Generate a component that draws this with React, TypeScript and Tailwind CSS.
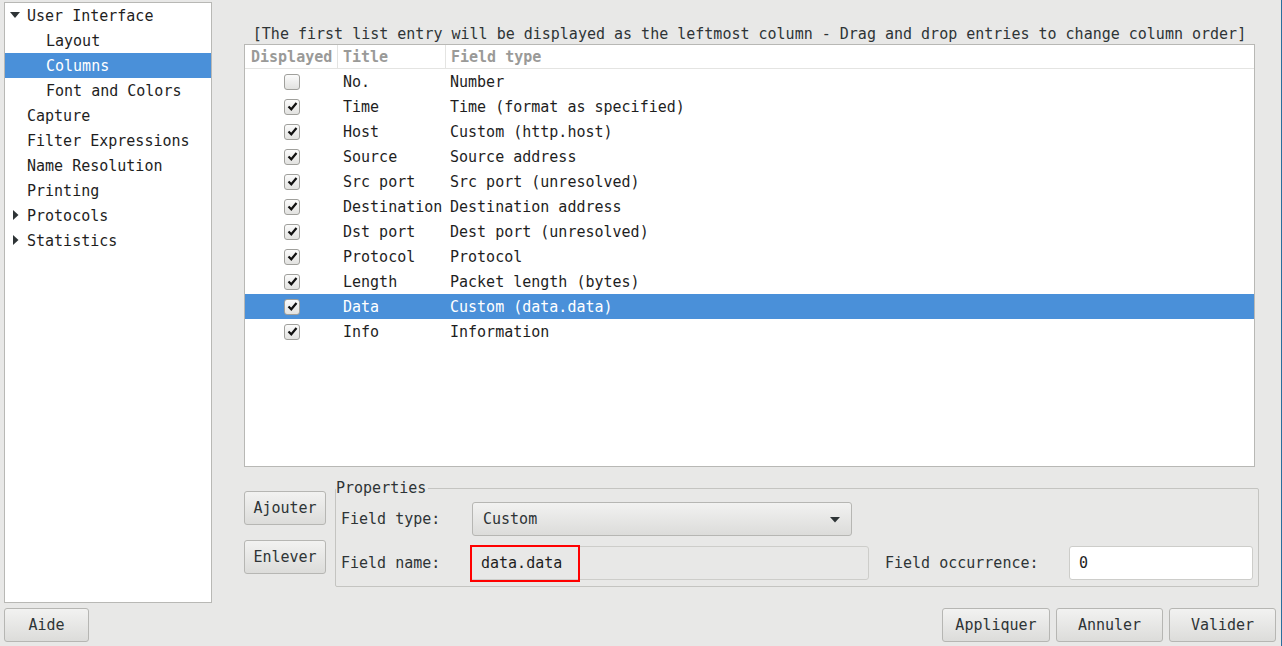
import React from "react";

const font = { fontFamily: '"DejaVu Sans Mono", "Liberation Mono", monospace' };

const tree = [
  { label: "User Interface", level: 0, arrow: "down" },
  { label: "Layout", level: 1 },
  { label: "Columns", level: 1, selected: true },
  { label: "Font and Colors", level: 1 },
  { label: "Capture", level: 0 },
  { label: "Filter Expressions", level: 0 },
  { label: "Name Resolution", level: 0 },
  { label: "Printing", level: 0 },
  { label: "Protocols", level: 0, arrow: "right" },
  { label: "Statistics", level: 0, arrow: "right" },
];

const columns = [
  { on: false, title: "No.", type: "Number" },
  { on: true, title: "Time", type: "Time (format as specified)" },
  { on: true, title: "Host", type: "Custom (http.host)" },
  { on: true, title: "Source", type: "Source address" },
  { on: true, title: "Src port", type: "Src port (unresolved)" },
  { on: true, title: "Destination", type: "Destination address" },
  { on: true, title: "Dst port", type: "Dest port (unresolved)" },
  { on: true, title: "Protocol", type: "Protocol" },
  { on: true, title: "Length", type: "Packet length (bytes)" },
  { on: true, title: "Data", type: "Custom (data.data)", selected: true },
  { on: true, title: "Info", type: "Information" },
];

function Button({ label, className }: { label: string; className: string }) {
  return (
    <div
      className={`flex h-[34px] items-center justify-center rounded-[3px] border border-[#b6b6b3] bg-gradient-to-b from-[#f2f2f1] to-[#dcdcda] text-[15px] text-[#2e3436] ${className}`}
    >
      {label}
    </div>
  );
}

function Check({ on }: { on: boolean }) {
  return (
    <div className="flex h-[16px] w-[16px] items-center justify-center rounded-[3px] border border-[#a0a09c] bg-gradient-to-b from-[#fbfbfb] to-[#e2e2e0]">
      {on && (
        <svg width="11" height="11" viewBox="0 0 11 11">
          <path d="M1.5 5.5 L4.3 8.3 L9.5 2" fill="none" stroke="#111" strokeWidth="2.2" />
        </svg>
      )}
    </div>
  );
}

export default function App() {
  return (
    <div
      style={font}
      className="flex h-[646px] w-[1282px] flex-col overflow-hidden border-r border-[#2a6f9e] bg-[#e8e8e7] text-[15px] leading-[20px] text-[#1e1e1e]"
    >
      <div className="flex h-[603px]">
        {/* arbre des préférences */}
        <div className="ml-[4px] mt-[2px] flex h-[601px] w-[208px] flex-col border border-[#b8b8b5] bg-white">
          {tree.map((t) => (
            <div
              key={t.label}
              className={`relative flex h-[25px] shrink-0 items-center ${
                t.selected ? "bg-[#4a90d9] text-white" : ""
              } ${t.level ? "pl-[41px]" : "pl-[22px]"}`}
            >
              {t.arrow === "down" && (
                <svg className="absolute left-[5px] top-[9px]" width="10" height="7" viewBox="0 0 10 7">
                  <path d="M0 0 H10 L5 6 Z" fill="#2e3436" />
                </svg>
              )}
              {t.arrow === "right" && (
                <svg className="absolute left-[8px] top-[7px]" width="6" height="10" viewBox="0 0 6 10">
                  <path d="M0 0 V10 L5.5 5 Z" fill="#2e3436" />
                </svg>
              )}
              {t.label}
            </div>
          ))}
        </div>

        {/* panneau colonnes */}
        <div className="ml-[32px] flex w-[1015px] flex-col pt-[24px]">
          <div className="mr-[4px] h-[20px] text-center text-[#2e3436]">
            [The first list entry will be displayed as the leftmost column - Drag and drop entries to change column order]
          </div>
          <div className="mr-[4px] flex h-[423px] flex-col border border-[#b8b8b5] bg-white">
            <div className="flex h-[24px] shrink-0 items-center border-b border-[#e4e4e2] font-bold text-[#9a9a98]">
              <div className="flex h-full w-[93px] items-center border-r border-[#e4e4e2] pl-[6px]">Displayed</div>
              <div className="flex h-full w-[108px] items-center border-r border-[#e4e4e2] pl-[5px]">Title</div>
              <div className="flex h-full items-center pl-[5px]">Field type</div>
            </div>
            {columns.map((c) => (
              <div
                key={c.title}
                className={`flex h-[25px] shrink-0 items-center ${c.selected ? "bg-[#4a90d9] text-white" : ""}`}
              >
                <div className="flex w-[94px] justify-center">
                  <Check on={c.on} />
                </div>
                <div className="w-[107px] pl-[4px]">{c.title}</div>
                <div className="pl-[4px]">{c.type}</div>
              </div>
            ))}
          </div>

          <div className="flex">
            <div className="mt-[24px] flex flex-col gap-[15px]">
              <Button label="Ajouter" className="w-[82px]" />
              <Button label="Enlever" className="w-[82px]" />
            </div>
            <fieldset className="ml-[9px] mt-[11px] h-[109px] flex-1 rounded-[2px] border border-[#c4c4c1] px-[5px] pb-[6px]">
              <legend className="-ml-[5px] px-0 pr-[2px] text-[#2e3436]">Properties</legend>
              <div className="mt-[4px] flex items-center">
                <div className="w-[131px] text-[#2e3436]">Field type:</div>
                <div className="relative flex h-[34px] w-[380px] items-center rounded-[3px] border border-[#b6b6b3] bg-gradient-to-b from-[#f2f2f1] to-[#dcdcda] pl-[10px] text-[#2e3436]">
                  Custom
                  <svg className="absolute right-[11px] top-[14px]" width="10" height="6" viewBox="0 0 10 6">
                    <path d="M0 0 H10 L5 5.5 Z" fill="#2e3436" />
                  </svg>
                </div>
              </div>
              <div className="mt-[10px] flex items-center">
                <div className="w-[129px] text-[#2e3436]">Field name:</div>
                <div className="relative flex h-[34px] w-[399px] items-center rounded-[3px] border border-[#cdcdca] bg-[#e8e8e7] pl-[10px]">
                  data.data
                  <div className="absolute -left-[1px] -top-[2px] h-[37px] w-[110px] border-2 border-[#ff0000]" />
                </div>
                <div className="ml-[16px] w-[184px] text-[#2e3436]">Field occurrence:</div>
                <div className="flex h-[34px] w-[184px] items-center rounded-[3px] border border-[#cdcdca] bg-white pl-[9px]">
                  0
                </div>
              </div>
            </fieldset>
          </div>
        </div>
      </div>

      {/* boutons du bas */}
      <div className="mt-[5px] flex pl-[4px] pr-[5px]">
        <Button label="Aide" className="w-[85px]" />
        <div className="flex-1" />
        <div className="flex gap-[6px]">
          <Button label="Appliquer" className="w-[108px]" />
          <Button label="Annuler" className="w-[107px]" />
          <Button label="Valider" className="w-[107px]" />
        </div>
      </div>
    </div>
  );
}
